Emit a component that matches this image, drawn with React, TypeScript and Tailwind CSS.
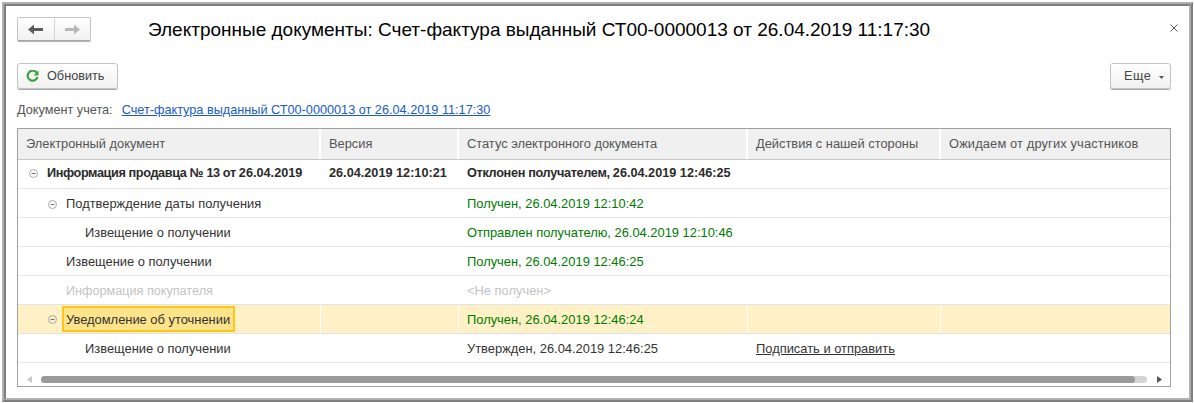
import React from "react";

const font = "font-['Liberation_Sans',Arial,sans-serif]";

type RowData = {
  indent: number;
  toggle?: boolean;
  name: React.ReactNode;
  nameClass?: string;
  version?: string;
  status?: React.ReactNode;
  statusClass?: string;
  action?: string;
  selected?: boolean;
  raised?: boolean;
};

const rows: RowData[] = [
  {
    indent: 11,
    toggle: true,
    raised: true,
    name: (
      <>
        <span className="tracking-[-0.39px]">Информация продавца № 13 от </span>26.04.2019
      </>
    ),
    nameClass: "font-bold text-[#2b2b2b] text-[12.7px]",
    version: "26.04.2019 12:10:21",
    status: (
      <span>
        <span className="tracking-[-0.33px]">Отклонен получателем, </span>26.04.2019 12:46:25
      </span>
    ),
    statusClass: "font-bold text-[#2b2b2b] text-[12.7px]",
  },
  {
    indent: 30,
    toggle: true,
    name: "Подтверждение даты получения",
    status: "Получен, 26.04.2019 12:10:42",
    statusClass: "text-[#007a00]",
  },
  {
    indent: 67,
    name: "Извещение о получении",
    status: "Отправлен получателю, 26.04.2019 12:10:46",
    statusClass: "text-[#007a00]",
  },
  {
    indent: 48,
    name: "Извещение о получении",
    status: "Получен, 26.04.2019 12:46:25",
    statusClass: "text-[#007a00]",
  },
  {
    indent: 48,
    name: "Информация покупателя",
    nameClass: "text-[#c4c4c4] text-[12.65px]",
    status: "<Не получен>",
    statusClass: "text-[#c4c4c4]",
  },
  {
    indent: 30,
    toggle: true,
    name: "Уведомление об уточнении",
    status: "Получен, 26.04.2019 12:46:24",
    statusClass: "text-[#007a00]",
    selected: true,
  },
  {
    indent: 67,
    name: "Извещение о получении",
    status: "Утвержден, 26.04.2019 12:46:25",
    action: "Подписать и отправить",
  },
];

const gridCols = "grid grid-cols-[303px_138px_289px_193px_minmax(0,1fr)]";

function Toggle() {
  return (
    <svg width="9" height="9" viewBox="0 0 9 9" className="shrink-0">
      <circle cx="4.5" cy="4.5" r="4" fill="none" stroke="#a8a8a8" />
      <path d="M2.5 4.5h4" stroke="#707070" />
    </svg>
  );
}

function Row({ row }: { row: RowData }) {
  const cellBorder = row.selected ? "border-r border-white" : "";
  const lift = row.raised ? "pb-[1px]" : "pt-[2px]";
  return (
    <div
      className={`${gridCols} h-[29px] border-b border-[#e4e4e4] text-[12.9px] ${row.selected ? "bg-[#fdf1c5]" : "bg-white"}`}
    >
      <div
        className={`flex items-center min-w-0 ${row.selected ? "" : lift} ${cellBorder}`}
        style={{ paddingLeft: row.indent }}
      >
        {row.toggle && (
          <span className="w-[18px] shrink-0 flex items-center">
            <Toggle />
          </span>
        )}
        {row.selected ? (
          <span className="-ml-[4px] h-[26px] w-[173px] flex items-center pl-[2px] pt-[2px] bg-[#fde48a] border-2 border-[#fbc71b] whitespace-nowrap">
            {row.name}
          </span>
        ) : (
          <span className={`whitespace-nowrap ${row.nameClass ?? ""}`}>{row.name}</span>
        )}
      </div>
      <div className={`flex items-center pl-[8px] font-bold text-[12.7px] text-[#2b2b2b] whitespace-nowrap ${lift} ${cellBorder}`}>
        {row.version}
      </div>
      <div className={`flex items-center pl-[8px] whitespace-nowrap ${lift} ${cellBorder} ${row.statusClass ?? ""}`}>
        {row.status}
      </div>
      <div className={`flex items-center pl-[8px] whitespace-nowrap underline ${lift} ${cellBorder}`}>{row.action}</div>
      <div />
    </div>
  );
}

export default function App() {
  const headers = [
    "Электронный документ",
    "Версия",
    "Статус электронного документа",
    "Действия с нашей стороны",
    "Ожидаем от других участников",
  ];

  return (
    <div className={`${font} w-[1194px] h-[403px] bg-white pt-[2px] pl-[2px] text-[12.7px] text-[#333]`}>
      <div className="w-[1191px] h-[400px] border-2 border-t-[#b0b0b0] border-l-[#b0b0b0] border-r-[#7f7f7f] border-b-[#7f7f7f]">
        <div className="h-full border-2 border-t-[#7f7f7f] border-l-[#7f7f7f] border-r-[#b0b0b0] border-b-[#b0b0b0] pl-[11px] pr-[18px] pt-[11px] pb-[11px] flex flex-col">
          {/* header line */}
          <div className="flex items-center h-[24px]">
            <div className="flex w-[74px] h-[24px] rounded-[2px] border border-[#c4c4c4] border-b-[#a8a8a8] bg-gradient-to-b from-white to-[#f1f1f1] shadow-[0_1px_0_#b0b0b0]">
              <div className="flex-1 flex items-center justify-center border-r border-[#d4d4d4]">
                <svg width="15" height="11" viewBox="0 0 15 11">
                  <path d="M0 5.5 6 .5v3.5h9v3H6v3.5z" fill="#5c5c5c" />
                </svg>
              </div>
              <div className="flex-1 flex items-center justify-center">
                <svg width="15" height="11" viewBox="0 0 15 11">
                  <path d="M15 5.5 9 .5v3.5H0v3h9v3.5z" fill="#b8b8b8" />
                </svg>
              </div>
            </div>
            <div className="ml-[57px] mt-[1px] text-[19px] text-black whitespace-nowrap leading-[24px]">
              Электронные документы: Счет-фактура выданный СТ00-0000013 от 26.04.2019 11:17:30
            </div>
            <div className="ml-auto mr-[-7px] mb-[3px] flex">
              <svg width="8" height="8" viewBox="0 0 8 8">
                <path d="M.5.5l7 7M7.5.5l-7 7" stroke="#555" fill="none" />
              </svg>
            </div>
          </div>

          {/* command bar */}
          <div className="flex justify-between mt-[22px]">
            <button className="w-[101px] h-[26px] flex items-center rounded-[3px] border border-[#c4c4c4] bg-gradient-to-b from-white to-[#f1f1f1] shadow-[0_1px_0_#a8a8a8] pl-[8px] pt-[2px] text-[#444]">
              <svg width="13" height="13" viewBox="0 0 13 13" className="mr-[8px] -mt-[2px]">
                <path d="M11 3.2A5 5 0 1 0 11.5 7" fill="none" stroke="#3aa53a" strokeWidth="2.2" />
                <path d="M12.5 .5v5h-5z" fill="#3aa53a" />
              </svg>
              Обновить
            </button>
            <button className="w-[61px] h-[26px] flex items-center rounded-[3px] border border-[#c4c4c4] bg-gradient-to-b from-white to-[#f1f1f1] shadow-[0_1px_0_#a8a8a8] pl-[13px] pt-[2px] text-[#444]">
              <span className="tracking-[0.5px]">Еще</span>
              <svg width="5" height="3" viewBox="0 0 5 3" className="ml-[8px]">
                <path d="M0 0h5L2.5 3z" fill="#555" />
              </svg>
            </button>
          </div>

          {/* document link */}
          <div className="flex mt-[15px] h-[14px] items-center text-[#555] whitespace-nowrap">
            <span>Документ учета:</span>
            <a className="ml-[9px] text-[#1a5bc4] underline">Счет-фактура выданный СТ00-0000013 от 26.04.2019 11:17:30</a>
          </div>

          {/* table */}
          <div className="mt-[10px] flex-1 border border-[#a0a0a0] flex flex-col min-h-0">
            <div className={`${gridCols} h-[31px] bg-[#f0f0f0] border-b border-[#c8c8c8] text-[#555] text-[12.85px]`}>
              {headers.map((h, i) => (
                <div
                  key={h}
                  className={`flex items-center whitespace-nowrap pl-[8px] pb-[1px] ${i < 4 ? "border-r-2 border-white" : "tracking-[0.14px]"}`}
                >
                  {h}
                </div>
              ))}
            </div>
            {rows.map((r, i) => (
              <Row key={i} row={r} />
            ))}
            {/* scrollbar */}
            <div className="flex-1 flex items-center pt-[9px] pl-[9px] pr-[8px]">
              <svg width="5" height="7" viewBox="0 0 5 7">
                <path d="M5 0v7L0 3.5z" fill="#c8c8c8" />
              </svg>
              <div className="ml-[9px] flex-1 h-[7px] rounded-full bg-[#d4d4d4] mr-[10px]">
                <div className="h-full w-[1094px] rounded-full bg-[#9a9a9a]" />
              </div>
              <svg width="5" height="7" viewBox="0 0 5 7">
                <path d="M0 0v7l5-3.5z" fill="#555" />
              </svg>
            </div>
          </div>
        </div>
      </div>
    </div>
  );
}
